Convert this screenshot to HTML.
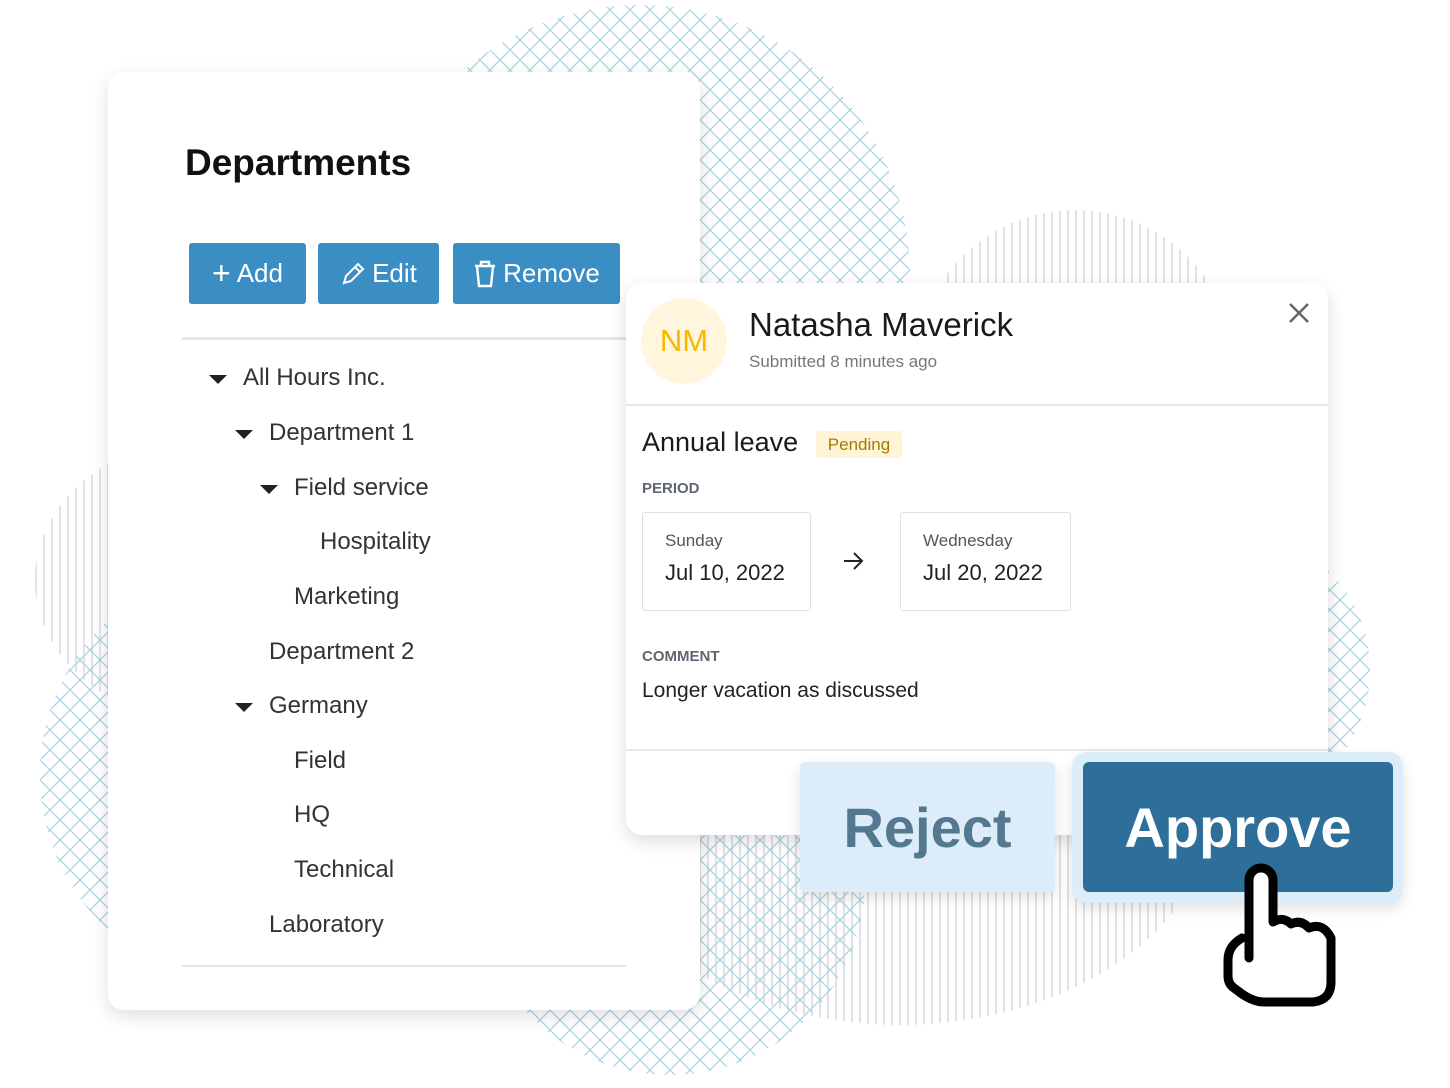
<!DOCTYPE html>
<html><head><meta charset="utf-8"><style>
*{margin:0;padding:0;box-sizing:border-box}
body{width:1450px;height:1088px;background:#fff;position:relative;overflow:hidden;font-family:"Liberation Sans",sans-serif;color:#222}
.a{position:absolute}
.panel{left:108px;top:72px;width:592px;height:938px;background:#fff;border-radius:16px;box-shadow:0 6px 18px rgba(0,0,0,.13)}
.btn{position:absolute;top:243px;height:61px;background:#3b8ec4;border-radius:3px;color:#fff;font-size:26px;display:flex;align-items:center;justify-content:center;gap:6px}
.t{position:absolute;font-size:24px;color:#333}
.tri{position:absolute;width:0;height:0;border-left:9px solid transparent;border-right:9px solid transparent;border-top:9px solid #222}
.card{left:626px;top:283px;width:702px;height:552px;background:#fff;border-radius:16px;box-shadow:0 6px 18px rgba(0,0,0,.14)}
.dbox{position:absolute;top:512px;height:99px;border:1.5px solid #dde1e5;border-radius:3px;background:#fff}
.dbox .d{position:absolute;left:22px;top:18px;font-size:17px;color:#555}
.dbox .v{position:absolute;left:22px;top:47px;font-size:22px;color:#222}
.lbl{position:absolute;font-size:15px;font-weight:bold;color:#5e6670}
</style></head><body>
<svg class="a" style="left:0;top:0" width="1450" height="1088">
<defs>
<pattern id="x" width="20" height="20" patternUnits="userSpaceOnUse">
<path d="M0 0L20 20M20 0L0 20" stroke="#a9d4e2" stroke-width="1.3"/>
</pattern>
<pattern id="v" width="8" height="8" patternUnits="userSpaceOnUse">
<path d="M4 0V8" stroke="#cfcfcf" stroke-width="1.2"/>
</pattern>
</defs>
<circle cx="640" cy="275" r="270" fill="url(#x)"/>
<circle cx="1075" cy="370" r="160" fill="url(#v)"/>
<ellipse cx="200" cy="580" rx="165" ry="140" fill="url(#v)"/>
<circle cx="250" cy="775" r="210" fill="url(#x)"/>
<ellipse cx="900" cy="810" rx="310" ry="215" fill="url(#v)"/>
<circle cx="670" cy="880" r="195" fill="url(#x)"/>
<circle cx="1230" cy="670" r="140" fill="url(#x)"/>
</svg>

<div class="a panel"></div>
<div class="a" style="left:185px;top:142px;font-size:37px;font-weight:bold;color:#111">Departments</div>
<div class="btn" style="left:189px;width:117px"><span style="font-size:32px;font-weight:300">+</span>Add</div>
<div class="btn" style="left:318px;width:121px"><svg width="26" height="26" viewBox="0 0 26 26"><path d="M4 22l2-7L18 3l5 5L11 20z M15 6l5 5" fill="none" stroke="#fff" stroke-width="2"/></svg>Edit</div>
<div class="btn" style="left:453px;width:167px"><svg width="24" height="28" viewBox="0 0 24 28"><path d="M2 6h20M8 6V2h8v4M4 6l2 20h12l2-20" fill="none" stroke="#fff" stroke-width="2.4"/></svg>Remove</div>
<div class="a" style="left:182px;top:337px;width:444px;height:3px;background:#e3e6ea"></div>
<div class="tri" style="left:209px;top:375px"></div><div class="t" style="left:243px;top:364px">All Hours Inc.</div>
<div class="tri" style="left:235px;top:430px"></div><div class="t" style="left:269px;top:419px">Department 1</div>
<div class="tri" style="left:260px;top:485px"></div><div class="t" style="left:294px;top:474px">Field service</div>
<div class="t" style="left:320px;top:528px">Hospitality</div>
<div class="t" style="left:294px;top:583px">Marketing</div>
<div class="t" style="left:269px;top:638px">Department 2</div>
<div class="tri" style="left:235px;top:703px"></div><div class="t" style="left:269px;top:692px">Germany</div>
<div class="t" style="left:294px;top:747px">Field</div>
<div class="t" style="left:294px;top:801px">HQ</div>
<div class="t" style="left:294px;top:856px">Technical</div>
<div class="t" style="left:269px;top:911px">Laboratory</div>
<div class="a" style="left:182px;top:965px;width:444px;height:2px;background:#e3e6ea"></div>

<div class="a card"></div>
<div class="a" style="left:641px;top:298px;width:86px;height:86px;border-radius:50%;background:#fff6dd;color:#f7b900;font-size:31px;display:flex;align-items:center;justify-content:center">NM</div>
<div class="a" style="left:749px;top:306px;font-size:33px;color:#1a1a1a">Natasha Maverick</div>
<div class="a" style="left:749px;top:352px;font-size:17px;color:#777">Submitted 8 minutes ago</div>
<svg class="a" style="left:1288px;top:302px" width="22" height="22"><path d="M2 2L20 20M20 2L2 20" stroke="#666" stroke-width="2.5"/></svg>
<div class="a" style="left:626px;top:404px;width:702px;height:2px;background:#e3e6ea"></div>
<div class="a" style="left:642px;top:427px;font-size:27px;color:#1a1a1a">Annual leave</div>
<div class="a" style="left:816px;top:431px;width:86px;height:27px;background:#fff4d6;border-radius:3px;color:#a87a00;font-size:17px;text-align:center;line-height:27px">Pending</div>
<div class="lbl" style="left:642px;top:480px">PERIOD</div>
<div class="dbox" style="left:642px;width:169px"><div class="d">Sunday</div><div class="v">Jul 10, 2022</div></div>
<svg class="a" style="left:842px;top:550px" width="22" height="22"><path d="M2 11H20M12 3l8 8-8 8" fill="none" stroke="#222" stroke-width="2"/></svg>
<div class="dbox" style="left:900px;width:171px"><div class="d">Wednesday</div><div class="v">Jul 20, 2022</div></div>
<div class="lbl" style="left:642px;top:648px">COMMENT</div>
<div class="a" style="left:642px;top:679px;font-size:21px;color:#222">Longer vacation as discussed</div>
<div class="a" style="left:626px;top:749px;width:702px;height:2px;background:#e6eaee"></div>

<div class="a" style="left:800px;top:762px;width:255px;height:130px;background:#dcedf9;border-radius:5px;box-shadow:0 6px 14px rgba(0,0,0,.12);color:#557891;font-size:56px;font-weight:bold;display:flex;align-items:center;justify-content:center">Reject</div>
<div class="a" style="left:1072px;top:752px;width:331px;height:151px;background:#dcedf9;border-radius:14px;box-shadow:0 6px 14px rgba(0,0,0,.12)"></div>
<div class="a" style="left:1083px;top:762px;width:310px;height:130px;background:#2e6f9a;border-radius:6px;color:#fff;font-size:56px;font-weight:bold;display:flex;align-items:center;justify-content:center">Approve</div>
<svg class="a" style="left:0;top:0" width="1450" height="1088">
<path d="M1249,958 V880 a12,12 0 0 1 24,0 V922 q10,-6 18,2 q10,-5 18,4 q14,-6 22,10 V982 q0,18 -18,20 H1264 q-10,0 -22,-8 l-8,-6 q-6,-4 -6,-12 V960 q0,-14 14,-22" fill="#fff" stroke="#000" stroke-width="9" stroke-linejoin="round" stroke-linecap="round"/>
</svg>
</body></html>
